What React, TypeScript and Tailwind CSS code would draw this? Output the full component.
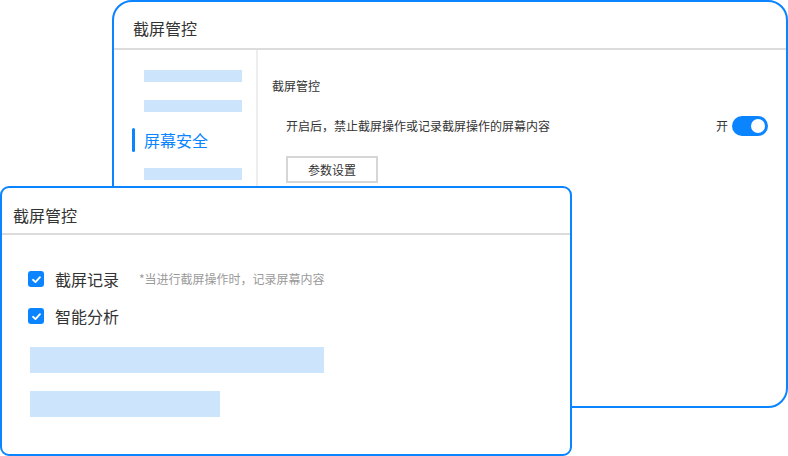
import React from 'react';

const font = { fontFamily: '"Noto Sans CJK SC", "Noto Sans", sans-serif' };

function Check() {
  return (
    <span className="w-4 h-4 rounded-[3px] bg-[#0a84ff] flex items-center justify-center">
      <svg width="11" height="11" viewBox="0 0 12 12" fill="none">
        <path d="M2.2 6.3 L4.9 8.8 L9.8 3.4" stroke="#fff" strokeWidth="2" strokeLinecap="round" strokeLinejoin="round" />
      </svg>
    </span>
  );
}

export default function App() {
  return (
    <div className="relative w-[788px] h-[456px] bg-white overflow-hidden text-[#333]" style={font}>
      {/* Back window */}
      <div className="absolute left-[112px] top-0 w-[676px] h-[408px] border-2 border-[#0a84ff] rounded-[20px] bg-white flex flex-col overflow-hidden">
        <div className="h-[48px] border-b-2 border-[#dcdcdc] flex items-center pl-[19px] pt-[6px] text-[16px] leading-6">
          截屏管控
        </div>
        <div className="flex flex-1">
          <div className="w-[144px] border-r-2 border-[#eeeeee] flex flex-col pl-[18px] pt-[20px]">
            <div className="ml-[12px] w-[98px] h-[12px] bg-[#cce5fd]" />
            <div className="ml-[12px] mt-[18px] w-[98px] h-[12px] bg-[#cce5fd]" />
            <div className="mt-[16px] h-[24px] flex items-center gap-[9px]">
              <span className="w-[3px] h-[24px] rounded-full bg-[#0a84ff]" />
              <span className="text-[16px] leading-6 text-[#0a84ff]">屏幕安全</span>
            </div>
            <div className="ml-[12px] mt-[16px] w-[98px] h-[12px] bg-[#cce5fd]" />
          </div>
          <div className="flex-1 flex flex-col pl-[14px] pt-[27px] pr-[18px]">
            <div className="text-[12px] leading-[18px]">截屏管控</div>
            <div className="mt-[22px] pl-[14px] flex items-center justify-between h-[18px]">
              <span className="text-[12px] leading-[18px]">开启后，禁止截屏操作或记录截屏操作的屏幕内容</span>
              <div className="flex items-center gap-[4px]">
                <span className="text-[12px] leading-[18px]">开</span>
                <span className="w-[36px] h-[20px] rounded-full bg-[#0a84ff] flex items-center justify-end pr-[3px]">
                  <span className="w-[14px] h-[14px] rounded-full bg-white" />
                </span>
              </div>
            </div>
            <div className="mt-[21px] ml-[14px] w-[92px] h-[27px] border-2 border-[#d6d6d6] flex items-center justify-center text-[12px]">
              参数设置
            </div>
          </div>
        </div>
      </div>

      {/* Front window */}
      <div className="absolute left-0 top-[186px] w-[572px] h-[270px] border-2 border-[#0a84ff] rounded-[9px] bg-white flex flex-col overflow-hidden">
        <div className="h-[47px] border-b-2 border-[#dcdcdc] flex items-center pl-[11px] pt-[8px] text-[16px] leading-6">
          截屏管控
        </div>
        <div className="flex flex-col pl-[26px] pt-[32px]">
          <div className="flex items-center h-[24px]">
            <Check />
            <span className="ml-[11px] text-[16px] leading-6">截屏记录</span>
            <span className="ml-[20px] text-[12px] text-[#9a9a9a]">*当进行截屏操作时，记录屏幕内容</span>
          </div>
          <div className="flex items-center h-[24px] mt-[13px]">
            <Check />
            <span className="ml-[11px] text-[16px] leading-6">智能分析</span>
          </div>
          <div className="ml-[2px] mt-[19px] w-[294px] h-[26px] bg-[#cce5fd]" />
          <div className="ml-[2px] mt-[18px] w-[190px] h-[26px] bg-[#cce5fd]" />
        </div>
      </div>
    </div>
  );
}
